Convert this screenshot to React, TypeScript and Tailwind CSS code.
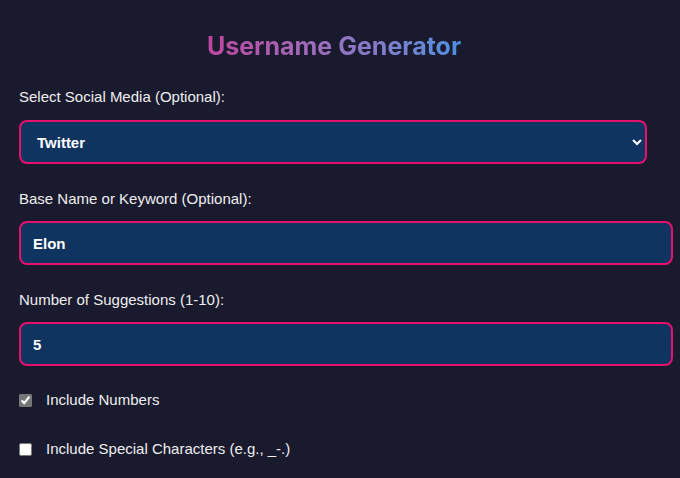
import * as React from "react"

export default function App() {
    const [platform, setPlatform] = React.useState("Twitter")
    const [base, setBase] = React.useState("Elon")
    const [count, setCount] = React.useState("5")
    const [numbers, setNumbers] = React.useState(true)
    const [special, setSpecial] = React.useState(false)

    const fieldClass =
        "h-[44px] rounded-lg border-2 border-[#e8106e] bg-[#0f3460] px-3 text-[15px] font-bold text-white outline-none"

    return (
        <div className="min-h-screen bg-[#1a1a2e] px-[19px] pt-[30px] font-['Liberation_Sans',Arial,sans-serif] text-[15px] text-[#eeeeee]">
            <div className="flex justify-center pr-[12px]">
                <h1 className="bg-gradient-to-r from-[#c0449f] to-[#4a90e2] bg-clip-text font-['Inter',sans-serif] text-[25px] leading-8 font-bold text-transparent">
                    Username Generator
                </h1>
            </div>

            <label className="mt-[26px] block leading-[18px]">Select Social Media (Optional):</label>
            <select
                value={platform}
                onChange={(e) => setPlatform(e.target.value)}
                className={`mt-[14px] block w-[628px] ${fieldClass}`}
            >
                <option>Twitter</option>
                <option>Instagram</option>
                <option>TikTok</option>
                <option>YouTube</option>
            </select>

            <label className="mt-[26px] block leading-[18px]">Base Name or Keyword (Optional):</label>
            <input
                value={base}
                onChange={(e) => setBase(e.target.value)}
                className={`mt-[13px] block w-[654px] ${fieldClass}`}
            />

            <label className="mt-[26px] block leading-[18px]">Number of Suggestions (1-10):</label>
            <input
                type="number"
                value={count}
                onChange={(e) => setCount(e.target.value)}
                className={`mt-[13px] block w-[654px] ${fieldClass}`}
            />

            <label className="mt-[25px] flex items-center gap-[14px] leading-[18px]">
                <input
                    type="checkbox"
                    checked={numbers}
                    onChange={(e) => setNumbers(e.target.checked)}
                    className="h-[13px] w-[13px] accent-[#767676]"
                />
                Include Numbers
            </label>

            <label className="mt-[31px] flex items-center gap-[14px] leading-[18px]">
                <input
                    type="checkbox"
                    checked={special}
                    onChange={(e) => setSpecial(e.target.checked)}
                    className="h-[13px] w-[13px]"
                />
                Include Special Characters (e.g., _-.)
            </label>
        </div>
    )
}
